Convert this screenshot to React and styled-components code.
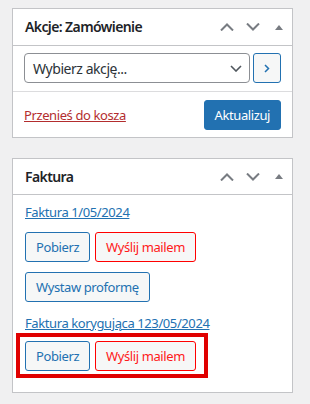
import React from "react";
import styled, { createGlobalStyle } from "styled-components";

const GlobalStyle = createGlobalStyle`
  html, body { margin: 0; padding: 0; background: #f0f0f1; }
  body {
    font-family: "Segoe UI", "Noto Sans", "Open Sans", sans-serif;
    font-size: 13px;
    letter-spacing: -0.4px;
    color: #1d2327;
    -webkit-font-smoothing: antialiased;
  }
  * { box-sizing: border-box; }
`;

const Page = styled.div`
  display: flex;
  flex-direction: column;
  gap: 20px;
  padding: 8px 0 0 12px;
  width: 293px;
`;

const Panel = styled.div`
  width: 281px;
  background: #fff;
  border: 1px solid #c3c4c7;
`;

const Header = styled.div`
  height: ${(p) => p.$h || 37}px;
  display: flex;
  align-items: center;
  border-bottom: 1px solid #c3c4c7;
`;

const Title = styled.h2`
  flex: 1;
  margin: 0;
  padding-left: 12px;
  font-size: 14px;
  font-weight: 600;
  letter-spacing: -0.6px;
  color: #1d2327;
  line-height: 1.4;
`;

const Handle = styled.span`
  width: 26px;
  height: 36px;
  display: flex;
  align-items: center;
  justify-content: center;
  color: #787c82;
`;

const SelectRow = styled.div`
  display: flex;
  gap: 3px;
  padding: 7px 11px 8px 11px;
  border-bottom: 1px solid #dcdcde;
`;

const Select = styled.div`
  flex: 1;
  height: 30px;
  display: flex;
  align-items: center;
  justify-content: space-between;
  border: 1px solid #8c8f94;
  border-radius: 4px;
  padding: 0 7px 0 8px;
  font-size: 14px;
  letter-spacing: -0.45px;
  color: #2c3338;
`;

const GoButton = styled.span`
  width: 28px;
  height: 30px;
  display: flex;
  align-items: center;
  justify-content: center;
  border: 1px solid #2271b1;
  border-radius: 3px;
  background: #f6f7f7;
  color: #2271b1;
`;

const Footer = styled.div`
  display: flex;
  align-items: center;
  justify-content: space-between;
  padding: 8px 11px 7px 11px;
`;

const TrashLink = styled.a`
  color: #b32d2e;
  text-decoration: underline;
  font-size: 13px;
`;

const PrimaryButton = styled.span`
  height: 30px;
  display: inline-flex;
  align-items: center;
  padding: 0 10px;
  background: #2271b1;
  border: 1px solid #2271b1;
  border-radius: 3px;
  color: #fff;
  font-size: 13px;
`;

const Body = styled.div`
  display: flex;
  flex-direction: column;
  align-items: flex-start;
  padding: 7px 12px 21px 12px;
`;

const DocLink = styled.a`
  display: block;
  color: #2271b1;
  text-decoration: underline;
  font-size: 13px;
  line-height: 18px;
  margin-top: ${(p) => p.$mt || 0}px;
`;

const ButtonRow = styled.div`
  display: flex;
  gap: 5px;
  margin-top: ${(p) => p.$mt || 0}px;
`;

const Button = styled.span`
  height: 30px;
  display: inline-flex;
  align-items: center;
  padding: 0 10px;
  border: 1px solid ${(p) => (p.$danger ? "#ff0000" : "#2271b1")};
  border-radius: 3px;
  background: #f6f7f7;
  color: ${(p) => (p.$danger ? "#ff1a1a" : "#2271b1")};
  font-size: 13px;
  white-space: nowrap;
`;

const Highlight = styled.div`
  position: relative;
  margin-top: ${(p) => p.$mt || 0}px;
  &::after {
    content: "";
    position: absolute;
    left: -9px;
    right: -12px;
    top: -8px;
    bottom: -7px;
    border: 4px solid #e00000;
    pointer-events: none;
  }
`;

const ChevronUp = () => (
  <svg width="14" height="8" viewBox="0 0 14 8">
    <polyline points="1,7.5 7,1.5 13,7.5" fill="none" stroke="currentColor" strokeWidth="2" />
  </svg>
);
const ChevronDown = () => (
  <svg width="14" height="8" viewBox="0 0 14 8">
    <polyline points="1,0.5 7,6.5 13,0.5" fill="none" stroke="currentColor" strokeWidth="2" />
  </svg>
);
const Triangle = () => (
  <svg width="8" height="5" viewBox="0 0 8 5">
    <polygon points="0,5 4,0 8,5" fill="currentColor" />
  </svg>
);

const HeaderControls = () => (
  <>
    <Handle><ChevronUp /></Handle>
    <Handle><ChevronDown /></Handle>
    <Handle><Triangle /></Handle>
  </>
);

export default function App() {
  return (
    <>
      <GlobalStyle />
      <Page>
        <Panel>
          <Header>
            <Title>Akcje: Zamówienie</Title>
            <HeaderControls />
          </Header>
          <SelectRow>
            <Select>
              <span>Wybierz akcję...</span>
              <svg width="12" height="7" viewBox="0 0 12 7">
                <polyline points="1,1 6,6 11,1" fill="none" stroke="#50575e" strokeWidth="1.6" />
              </svg>
            </Select>
            <GoButton>
              <svg width="6" height="9" viewBox="0 0 6 9">
                <polyline points="1,1 4.5,4.5 1,8" fill="none" stroke="currentColor" strokeWidth="1.5" />
              </svg>
            </GoButton>
          </SelectRow>
          <Footer>
            <TrashLink>Przenieś do kosza</TrashLink>
            <PrimaryButton>Aktualizuj</PrimaryButton>
          </Footer>
        </Panel>

        <Panel>
          <Header $h={36}>
            <Title>Faktura</Title>
            <HeaderControls />
          </Header>
          <Body>
            <DocLink $mt={1}>Faktura 1/05/2024</DocLink>
            <ButtonRow $mt={11}>
              <Button>Pobierz</Button>
              <Button $danger>Wyślij mailem</Button>
            </ButtonRow>
            <ButtonRow $mt={10}>
              <Button>Wystaw proformę</Button>
            </ButtonRow>
            <DocLink $mt={12}>Faktura korygująca 123/05/2024</DocLink>
            <Highlight $mt={9}>
              <ButtonRow>
                <Button>Pobierz</Button>
                <Button $danger>Wyślij mailem</Button>
              </ButtonRow>
            </Highlight>
          </Body>
        </Panel>
      </Page>
    </>
  );
}
